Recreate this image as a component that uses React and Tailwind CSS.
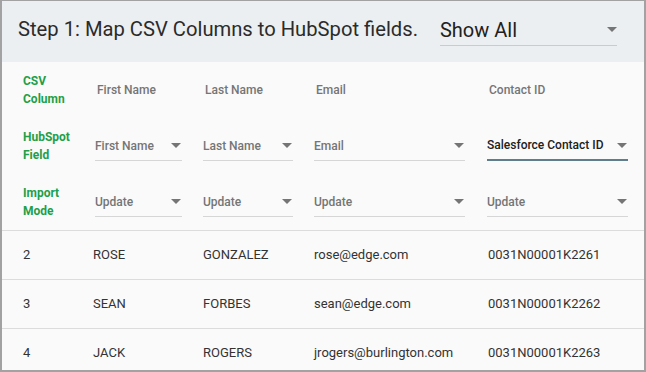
import React from "react";

function Arrow() {
  return (
    <span className="inline-block w-0 h-0 border-x-[5px] border-x-transparent border-t-[5px] border-t-[#757575]" />
  );
}

function Sel({ text, width, focused }) {
  return (
    <div
      className={
        "flex items-center justify-between pr-[1px] " +
        (focused ? "h-[30px] border-b-2 border-[#607d8b]" : "h-[29px] border-b border-[#d6d6d6]")
      }
      style={{ width }}
    >
      <span
        className={
          "text-[12px] font-medium " + (focused ? "text-[#212121]" : "text-[#757575]")
        }
      >
        {text}
      </span>
      <Arrow />
    </div>
  );
}

function Label({ a, b }) {
  return (
    <div className="text-[12px] font-bold leading-[18px] text-[#1f9f48]">
      <div>{a}</div>
      <div>{b}</div>
    </div>
  );
}

const rowGrid =
  "grid grid-cols-[72px_108px_111px_173px_141px] items-center pl-[21px]";

const data = [
  ["2", "ROSE", "GONZALEZ", "rose@edge.com", "0031N00001K2261"],
  ["3", "SEAN", "FORBES", "sean@edge.com", "0031N00001K2262"],
  ["4", "JACK", "ROGERS", "jrogers@burlington.com", "0031N00001K2263"],
];

export default function App() {
  return (
    <div className="w-[646px] h-[372px] overflow-hidden border-t border-l-2 border-r-2 border-b-2 border-[#a2a2a2] bg-[#fafafa] font-['Roboto',sans-serif] flex flex-col">
      <div className="h-[61px] shrink-0 bg-[#eceff1] flex items-start pt-[13px] pl-[16px]">
        <div className="text-[20.2px] leading-[30px] text-[#2b2b2b]">
          Step 1: Map CSV Columns to HubSpot fields.
        </div>
        <div className="ml-[22px] w-[177px] h-[32px] border-b border-[#c8ccd0] flex items-center justify-between">
          <span className="text-[20px] text-[#212121]">Show All</span>
          <Arrow />
        </div>
      </div>

      <div className="shrink-0">
        <div className={rowGrid + " h-[56px]"}>
          <Label a="CSV" b="Column" />
          <div className="pl-[2px] text-[12px] font-medium text-[#757575]">First Name</div>
          <div className="pl-[2px] text-[12px] font-medium text-[#757575]">Last Name</div>
          <div className="pl-[2px] text-[12px] font-medium text-[#757575]">Email</div>
          <div className="pl-[2px] text-[12px] font-medium text-[#757575]">Contact ID</div>
        </div>
        <div className={rowGrid + " h-[56px]"}>
          <Label a="HubSpot" b="Field" />
          <Sel text="First Name" width="87px" />
          <Sel text="Last Name" width="90px" />
          <Sel text="Email" width="151px" />
          <Sel text="Salesforce Contact ID" width="141px" focused />
        </div>
        <div className={rowGrid + " h-[56px]"}>
          <Label a="Import" b="Mode" />
          <Sel text="Update" width="87px" />
          <Sel text="Update" width="90px" />
          <Sel text="Update" width="151px" />
          <Sel text="Update" width="141px" />
        </div>
      </div>

      {data.map((r) => (
        <div
          key={r[0]}
          className={rowGrid + " h-[49px] shrink-0 border-t border-[#dcdcdc] text-[13px] text-[#333333]"}
        >
          <div>{r[0]}</div>
          <div className="-ml-[2px]">{r[1]}</div>
          <div>{r[2]}</div>
          <div>{r[3]}</div>
          <div className="pl-[1px]">{r[4]}</div>
        </div>
      ))}
    </div>
  );
}
